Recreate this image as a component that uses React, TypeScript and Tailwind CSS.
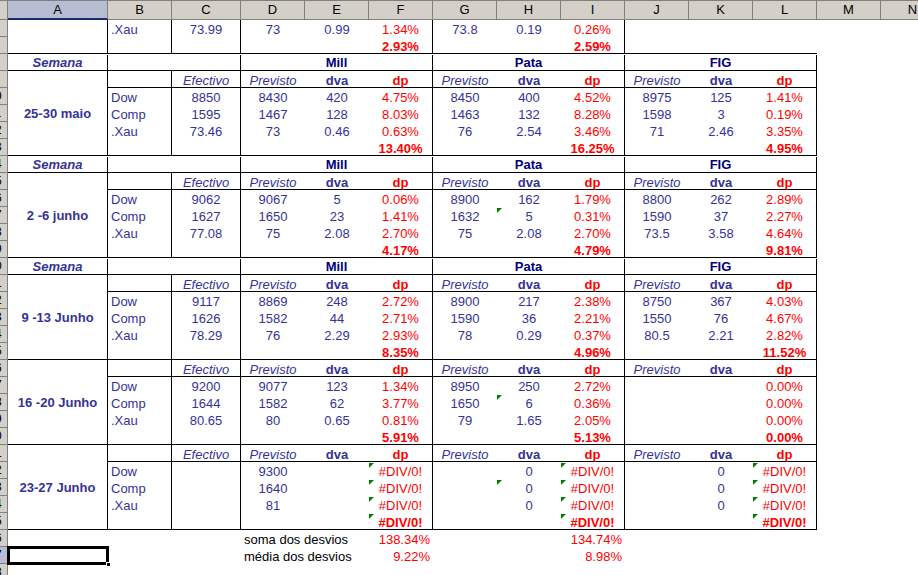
import clsx from "clsx";

const navy = "text-[#333399]";
const red = "text-[#ff0000]";

// B..L column widths and which ones carry a right border
const cols = [
  { w: "w-[64px]", br: true },
  { w: "w-[69px]", br: true },
  { w: "w-[64px]", br: false },
  { w: "w-[64px]", br: false },
  { w: "w-[64px]", br: true },
  { w: "w-[64px]", br: false },
  { w: "w-[64px]", br: false },
  { w: "w-[64px]", br: true },
  { w: "w-[64px]", br: false },
  { w: "w-[64px]", br: false },
  { w: "w-[64px]", br: true },
];

const headerVals = ["", "Efectivo", "Previsto", "dva", "dp", "Previsto", "dva", "dp", "Previsto", "dva", "dp"];

type Block = {
  label: string;
  semana: boolean;
  rows: string[][];
  totals: string[];
  tris?: string[];
};

const blocks: Block[] = [
  {
    label: "25-30 maio",
    semana: true,
    rows: [
      ["Dow", "8850", "8430", "420", "4.75%", "8450", "400", "4.52%", "8975", "125", "1.41%"],
      ["Comp", "1595", "1467", "128", "8.03%", "1463", "132", "8.28%", "1598", "3", "0.19%"],
      [".Xau", "73.46", "73", "0.46", "0.63%", "76", "2.54", "3.46%", "71", "2.46", "3.35%"],
    ],
    totals: ["13.40%", "16.25%", "4.95%"],
  },
  {
    label: "2 -6 junho",
    semana: true,
    rows: [
      ["Dow", "9062", "9067", "5", "0.06%", "8900", "162", "1.79%", "8800", "262", "2.89%"],
      ["Comp", "1627", "1650", "23", "1.41%", "1632", "5", "0.31%", "1590", "37", "2.27%"],
      [".Xau", "77.08", "75", "2.08", "2.70%", "75", "2.08", "2.70%", "73.5", "3.58", "4.64%"],
    ],
    totals: ["4.17%", "4.79%", "9.81%"],
    tris: ["1-6"],
  },
  {
    label: "9 -13 Junho",
    semana: true,
    rows: [
      ["Dow", "9117", "8869", "248", "2.72%", "8900", "217", "2.38%", "8750", "367", "4.03%"],
      ["Comp", "1626", "1582", "44", "2.71%", "1590", "36", "2.21%", "1550", "76", "4.67%"],
      [".Xau", "78.29", "76", "2.29", "2.93%", "78", "0.29", "0.37%", "80.5", "2.21", "2.82%"],
    ],
    totals: ["8.35%", "4.96%", "11.52%"],
  },
  {
    label: "16 -20 Junho",
    semana: false,
    rows: [
      ["Dow", "9200", "9077", "123", "1.34%", "8950", "250", "2.72%", "", "", "0.00%"],
      ["Comp", "1644", "1582", "62", "3.77%", "1650", "6", "0.36%", "", "", "0.00%"],
      [".Xau", "80.65", "80", "0.65", "0.81%", "79", "1.65", "2.05%", "", "", "0.00%"],
    ],
    totals: ["5.91%", "5.13%", "0.00%"],
    tris: ["1-6"],
  },
  {
    label: "23-27 Junho",
    semana: false,
    rows: [
      ["Dow", "", "9300", "", "#DIV/0!", "", "0", "#DIV/0!", "", "0", "#DIV/0!"],
      ["Comp", "", "1640", "", "#DIV/0!", "", "0", "#DIV/0!", "", "0", "#DIV/0!"],
      [".Xau", "", "81", "", "#DIV/0!", "", "0", "#DIV/0!", "", "0", "#DIV/0!"],
    ],
    totals: ["#DIV/0!", "#DIV/0!", "#DIV/0!"],
    tris: ["0-4", "1-4", "2-4", "3-4", "1-6", "0-7", "1-7", "2-7", "3-7", "0-10", "1-10", "2-10", "3-10"],
  },
];

const colHeads = [
  { l: "A", w: "w-[100px]" },
  { l: "B", w: "w-[64px]" },
  { l: "C", w: "w-[69px]" },
  { l: "D", w: "w-[64px]" },
  { l: "E", w: "w-[64px]" },
  { l: "F", w: "w-[64px]" },
  { l: "G", w: "w-[64px]" },
  { l: "H", w: "w-[64px]" },
  { l: "I", w: "w-[64px]" },
  { l: "J", w: "w-[64px]" },
  { l: "K", w: "w-[64px]" },
  { l: "L", w: "w-[64px]" },
  { l: "M", w: "w-[64px]" },
  { l: "N", w: "w-[64px]" },
];

function Tri() {
  return (
    <span className="absolute left-0 top-px h-0 w-0 border-t-[5px] border-r-[5px] border-t-[#008000] border-r-transparent" />
  );
}

type Kind = "head" | "data" | "total";

function SheetRow({
  values,
  kind,
  last,
  open,
  ri,
  tris = [],
}: {
  values: string[];
  kind: Kind;
  last?: boolean;
  open?: boolean;
  ri: number;
  tris?: string[];
}) {
  return (
    <div className={clsx("flex h-[17px]", last && "border-b border-black")}>
      {cols.map((c, i) => {
        const v = values[i] ?? "";
        const isDp = i === 4 || i === 7 || i === 10;
        let style = "";
        if (kind === "head") {
          if (isDp) style = clsx(red, "font-bold");
          else if (v === "dva") style = clsx(navy, "font-bold");
          else style = clsx(navy, "italic");
        } else if (kind === "total") {
          style = clsx(red, "font-bold");
        } else {
          style = isDp ? red : navy;
        }
        return (
          <div
            key={i}
            className={clsx(
              "relative h-[17px] shrink-0 whitespace-nowrap pt-px leading-[17px]",
              c.w,
              c.br && !(open && i === 10) && "border-r border-black",
              i === 0 && kind === "data" ? "pl-[3px] text-left" : "text-center",
              style
            )}
          >
            {tris.includes(`${ri}-${i}`) && <Tri />}
            {v}
          </div>
        );
      })}
    </div>
  );
}

function SemanaRow() {
  return (
    <div className="flex h-[17px] w-[809px] border-b border-black pt-px leading-[16px]">
      <div className={clsx("w-[100px] border-r border-black text-center font-bold italic", navy)}>Semana</div>
      <div className="w-[133px] border-r border-black" />
      <div className="w-[192px] border-r border-black text-center font-bold text-[#000080]">Mill</div>
      <div className="w-[192px] border-r border-black text-center font-bold text-[#000080]">Pata</div>
      <div className="w-[192px] border-r border-black text-center font-bold text-[#000080]">FIG</div>
    </div>
  );
}

function WeekBlock({ b }: { b: Block }) {
  return (
    <>
      {b.semana && <SemanaRow />}
      <div className="flex">
        <div
          className={clsx(
            "flex h-[85px] w-[100px] shrink-0 items-center justify-center border-b border-r border-black pt-[2px] font-bold",
            navy
          )}
        >
          {b.label}
        </div>
        <div className="flex flex-col">
          <SheetRow values={headerVals} kind="head" last ri={-1} />
          {b.rows.map((r, i) => (
            <SheetRow key={i} values={r} kind="data" ri={i} tris={b.tris} />
          ))}
          <SheetRow
            values={["", "", "", "", b.totals[0], "", "", b.totals[1], "", "", b.totals[2]]}
            kind="total"
            last
            ri={3}
            tris={b.tris}
          />
        </div>
      </div>
    </>
  );
}

function SumRow({ label, f, i, selected }: { label: string; f: string; i: string; selected?: boolean }) {
  return (
    <div className="flex h-[17px] pt-px leading-[17px] text-black">
      <div className="relative w-[100px] shrink-0">
        {selected && (
          <>
            <div className="absolute -left-[1px] -top-[2px] h-[19px] w-[102px] border-[3px] border-black" />
            <div className="absolute left-[98px] top-[14px] h-[5px] w-[5px] border border-white bg-black" />
          </>
        )}
      </div>
      <div className="w-[64px] shrink-0" />
      <div className="w-[69px] shrink-0" />
      <div className="w-[64px] shrink-0 whitespace-nowrap pl-[3px]">{label}</div>
      <div className="w-[64px] shrink-0" />
      <div className={clsx("w-[64px] shrink-0 pr-[3px] text-right", red)}>{f}</div>
      <div className="w-[64px] shrink-0" />
      <div className="w-[64px] shrink-0" />
      <div className={clsx("w-[64px] shrink-0 pr-[3px] text-right", red)}>{i}</div>
    </div>
  );
}

export default function App() {
  const rowNums = Array.from({ length: 33 }, (_, k) => k + 6);
  return (
    <div className="h-[575px] w-[918px] overflow-hidden bg-white font-['Liberation_Sans',Arial,sans-serif] text-[13px]">
      {/* column headers */}
      <div className="flex h-[20px] border-t border-[#808080] bg-[#d4d0c8]">
        <div className="w-[8px] shrink-0 border-b border-r border-[#808080]" />
        {colHeads.map((c) => (
          <div
            key={c.l}
            className={clsx(
              "shrink-0 border-r text-center leading-[18px] text-black",
              c.w,
              c.l === "A"
                ? "border-b-2 border-b-[#1b2a6b] border-r-[#808080] bg-[#b6bdd2]"
                : "border-b border-[#808080]"
            )}
          >
            {c.l}
          </div>
        ))}
      </div>

      <div className="flex">
        {/* row headers, scrolled so only the right edge shows */}
        <div className="flex w-[8px] shrink-0 flex-col overflow-hidden border-r border-[#808080]">
          {rowNums.map((n, k) => (
            <div
              key={n}
              className={clsx(
                "flex h-[17px] shrink-0 justify-end overflow-hidden border-b border-[#808080] leading-[16px]",
                k === 31 ? "bg-[#b6bdd2]" : "bg-[#d4d0c8]"
              )}
            >
              <div className="w-[25px] shrink-0 text-center text-black">{n}</div>
            </div>
          ))}
        </div>

        <div className="flex flex-col">
          {/* tail of the previous week */}
          <div className="flex">
            <div className="h-[34px] w-[100px] shrink-0 border-b border-r border-black" />
            <div className="flex flex-col">
              <SheetRow
                values={[".Xau", "73.99", "73", "0.99", "1.34%", "73.8", "0.19", "0.26%", "", "", ""]}
                kind="data"
                open
                ri={0}
              />
              <SheetRow
                values={["", "", "", "", "2.93%", "", "", "2.59%", "", "", ""]}
                kind="total"
                open
                last
                ri={1}
              />
            </div>
          </div>

          {blocks.map((b) => (
            <WeekBlock key={b.label} b={b} />
          ))}

          <SumRow label="soma dos desvios" f="138.34%" i="134.74%" />
          <SumRow label="média dos desvios" f="9.22%" i="8.98%" selected />
        </div>
      </div>
    </div>
  );
}
